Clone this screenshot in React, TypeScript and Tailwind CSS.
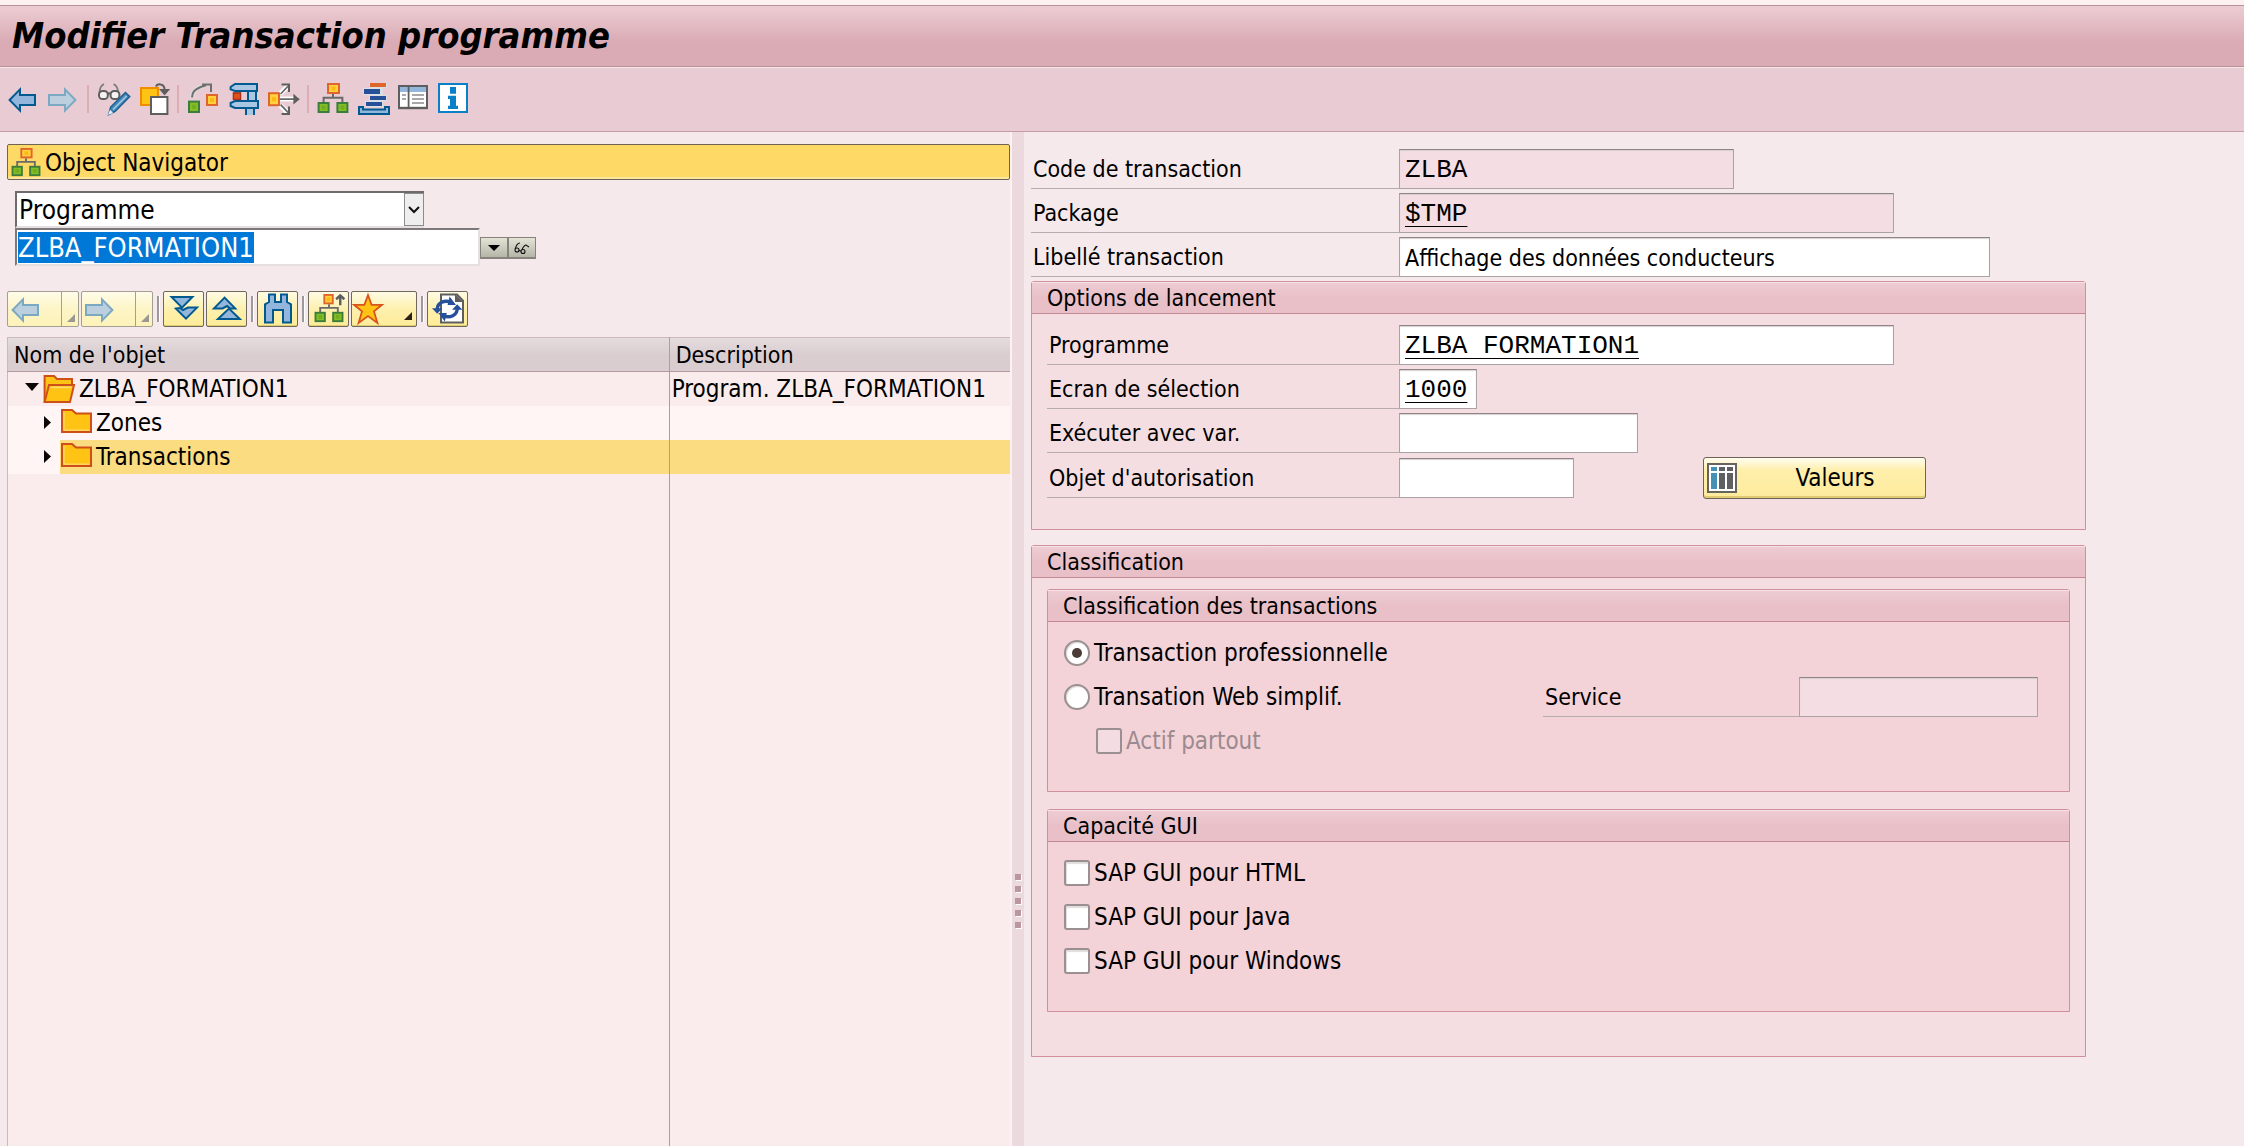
import { useEffect, useRef } from 'react';
import type { ReactNode } from 'react';

/* ---------- Icons (16-unit grid) ---------- */

function Icon({ children, className = 'size-8' }: { children: ReactNode; className?: string }) {
  return (
    <svg viewBox="0 0 16 16" className={`shrink-0 overflow-visible ${className}`} fill="none" aria-hidden="true">
      {children}
    </svg>
  );
}

function ArrowLeft({ dim = false, className }: { dim?: boolean; className?: string }) {
  return (
    <Icon className={className}>
      <path
        d="M1.3 8.5 6.5 3.2V6H14v5H6.5v2.8Z"
        fill={dim ? '#bccfdf' : '#93b7dc'}
        stroke={dim ? '#7ba9c2' : '#00598f'}
      />
    </Icon>
  );
}

function ArrowRight({ className }: { className?: string }) {
  return (
    <Icon className={className}>
      <path d="M14.2 8.5 9 3.2V6H1v5h8v2.8Z" fill="#bccfdf" stroke="#7ba9c2" />
    </Icon>
  );
}

function Square({ x, y, w = 6, h = 5.5, tone }: { x: number; y: number; w?: number; h?: number; tone: 'green' | 'orange' }) {
  const green = tone === 'green';
  return (
    <>
      <rect x={x + 0.5} y={y + 0.5} width={w - 1} height={h - 1} fill={green ? '#86bc25' : '#ffd040'} stroke={green ? '#3a7d3c' : '#e0652a'} />
      <rect x={x + w / 2 - 1} y={y + h / 2 - 1} width="2" height="2" fill={green ? '#6fae1e' : '#ffb80f'} />
    </>
  );
}

function DisplayChange() {
  return (
    <Icon>
      <path d="M1.2 4.8C1.400 2.500 2 1.200 3.500.6M10.600 4.800C10.400 2.500 9.800 1.200 8.300.6" stroke="#7d7d7d" strokeWidth=".9" />
      <rect x="1" y="4" width="4.4" height="4" rx="1.8" fill="#f6f2f3" stroke="#5e5e5e" />
      <rect x="6.8" y="4" width="4.4" height="4" rx="1.8" fill="#f6f2f3" stroke="#5e5e5e" />
      <path d="M5 5.2h2" stroke="#5e5e5e" />
      <path d="m5.8 15.8 1-3.8 7.4-7.3 2.2 2.1-7.3 7.4Z" fill="#3f86b5" stroke="#1d5f93" strokeWidth=".7" />
      <path d="m8 13.3 6.8-6.9" stroke="#9cc3e0" strokeWidth=".9" />
      <path d="m5.5 16 2.6-1-1.6-1.6Z" fill="#e4eef5" />
    </Icon>
  );
}

function CopyObject() {
  return (
    <Icon>
      <rect x="2" y="2.5" width="8.5" height="8.5" fill="#ffc313" stroke="#f08c00" />
      <rect x="7" y="7" width="8.2" height="8.5" fill="#fff" stroke="#5e5e5e" />
      <path d="M9.5 1.8C10 .3 13.4 0 13.8 3" stroke="#5e5e5e" />
      <path d="M11 3h5.6l-2.8 3.2Z" fill="#5e5e5e" />
    </Icon>
  );
}

function MoveObject() {
  return (
    <Icon>
      <path d="M2.5 7.5c0-3 1.5-4.5 4-5.5L9 1.3" stroke="#dcdcdc" strokeWidth="2.2" />
      <path d="M2.5 7.3c0-3 1.5-4 4.3-5.3l2.7-.8M7.5.7H12v3.8" stroke="#6f6f6f" />
      <Square x={0.5} y={8.8} tone="green" h={6.2} />
      <Square x={9.5} y={5.5} tone="orange" h={6} />
    </Icon>
  );
}

function Clamp() {
  return (
    <Icon>
      <path d="M10.5 4h4v6h-4zM9.5 12.5h4V16h-4z" fill="#a9c6e3" />
      <path d="M10.5 4v6M14.5 4v6M9.5 12.5V16M13.5 12.5V16" stroke="#00598f" />
      <path d="M15 .5H4L1.8 2v1.2L4 4h11Z" fill="#a9c6e3" stroke="#00598f" />
      <path d="M15.5 9H4L1.8 10v1.5L4 12.5h11.5Z" fill="#a9c6e3" stroke="#00598f" />
      <path d="M3 5h4M3 8.2h4" stroke="#5e5e5e" strokeWidth=".7" />
      <rect x="3.2" y="5" width="3.6" height="3.2" fill="#e0501a" stroke="#a8321c" strokeWidth=".7" />
    </Icon>
  );
}

function WhereUsed() {
  return (
    <Icon>
      <path d="m6.5 5.5 4-4M6.5 11l4 4" stroke="#fff" strokeWidth="2.4" />
      <path d="M6.5 8h9" stroke="#fff" strokeWidth="2.4" />
      <path d="m6.8 5.5 3.8-4M6.8 10.8l3.8 4M6.5 8.1H14" stroke="#6a6a6a" strokeWidth=".9" />
      <path d="M7.3.7H11v3.8M7.3 15.5H11v-3.8" stroke="#5e5e5e" />
      <path d="M13.2 5.4v5.4L16.4 8.1Z" fill="#5e5e5e" />
      <Square x={0.5} y={4.6} tone="orange" h={7} />
    </Icon>
  );
}

function Hierarchy({ className, arrow = false }: { className?: string; arrow?: boolean }) {
  return (
    <Icon className={className}>
      <path d="M8 5.5V7.4M3.3 9.8V7.4h9.4v2.4" stroke="#6a6a6a" />
      <Square x={5} y={0} tone="orange" w={arrow ? 5.5 : 6.5} h={5.5} />
      <Square x={0.3} y={9.5} tone="green" />
      <Square x={9.7} y={9.5} tone="green" />
      {arrow && <path d="M14 6V1M11.8 2.8 14 .7l2.2 2.1" stroke="#5e5e5e" strokeWidth="1.3" />}
    </Icon>
  );
}

function Stack() {
  return (
    <Icon>
      <path d="M6 0h9v2.5h-2V6h2v3h-2v3H4V9h2V6H3V2.5h3Z" fill="#dcdfe2" />
      <rect x="6.5" width="8" height="2" fill="#e0652a" />
      <path d="M3.5 3h8v2.5h-8zM6.5 6.5h8v2h-8zM4.5 9.5h8v2h-8z" fill="#26509a" />
      <path d="M1 12h2v1.3h11V12h2v3.5H1Z" fill="#93b7dc" stroke="#00598f" />
    </Icon>
  );
}

function PanelList() {
  return (
    <Icon>
      <rect x="1" y="1.5" width="14" height="11" fill="#fff" stroke="#5e5e5e" />
      <path d="M1.5 2h13v2.5h-13z" fill="#93b7dc" />
      <path d="M5.8 2v10" stroke="#5e5e5e" strokeWidth=".9" />
      <path d="M2.5 6h2M2.5 8h2M7.5 6h6M7.5 8h6M7.5 10h6" stroke="#a8a8a8" strokeWidth=".9" />
      <path d="M.5 12.5h15" stroke="#5e5e5e" strokeWidth="1.2" />
    </Icon>
  );
}

function Info() {
  return (
    <Icon>
      <rect x="1" y=".5" width="14" height="14" fill="#fff" stroke="#0a80c8" />
      <path d="M6.5 2h3v3.4h-3zM5.5 6.4h4v5h1v1.6h-5v-1.6h1V8h-1Z" fill="#0a80c8" />
    </Icon>
  );
}

function ChevronsDown() {
  return (
    <Icon>
      <path d="M1.8 2h10.4L7 7.3Z" fill="#93b7dc" stroke="#00598f" />
      <path d="M4 7.8 6 7.5l1.5 1L10 7.3h4.5L9 12.8Z" fill="#93b7dc" stroke="#00598f" />
    </Icon>
  );
}

function ChevronsUp() {
  return (
    <Icon>
      <path d="m1.5 7.7 5.3-5.4 5.3 5.4H9.5L8 6.5 5.8 7.7Z" fill="#93b7dc" stroke="#00598f" />
      <path d="M3.5 13 9 7.8l5.4 5.2Z" fill="#93b7dc" stroke="#00598f" />
    </Icon>
  );
}

function Binoculars() {
  return (
    <Icon>
      <path
        d="M3.500.8h3v3.700h3V.8h3v3.700l2 1.200v9h-4V8.500H5.500v6.200h-4V5.700l2-1.200Z"
        fill="#93b7dc"
        stroke="#00598f"
      />
    </Icon>
  );
}

function Star() {
  return (
    <Icon>
      <path
        d="m8 1 1.8 4.9H15l-4 3.3 1.7 5.8L8 11.5 3.3 15 5 9.2 1 5.9h5.2Z"
        fill="#ffc313"
        stroke="#d9531e"
        strokeWidth=".9"
      />
    </Icon>
  );
}

function Refresh() {
  return (
    <Icon>
      <path d="M4.500.8h8l3 3v11h-11Z" fill="#fff" stroke="#5e5e5e" />
      <path d="M11.500.5v4h4.200Z" fill="#5e5e5e" />
      <path d="M2.600 8C2.800 5 6 3.200 9.600 4.600" stroke="#26509a" strokeWidth="1.700" />
      <path d="M12.600 8c-.2 3-3.400 4.800-7 3.400" stroke="#26509a" strokeWidth="1.700" />
      <path d="M8.800 1.800 12 6H7.800ZM6.400 14.200 3.200 10h4.200ZM0 7.600h5.200L2.600 10.400ZM10 8.400h5.200L12.600 5.600Z" fill="#26509a" />
    </Icon>
  );
}

function Folder({ open = false }: { open?: boolean }) {
  return (
    <Icon>
      {open ? (
        <>
          <path d="M.8 14.5V1.5h4.7L7 3h7.5v3" fill="#ffc313" stroke="#cf4f1a" />
          <path d="M.8 14.5 3 6h12.5l-2 8.5Z" fill="#ffc313" stroke="#cf4f1a" />
          <path d="M3.8 7.2h10.4" stroke="#ffdc6e" strokeWidth=".8" />
        </>
      ) : (
        <>
          <path d="M1 12.5V1.5h5L8 3.3h7.5v9.2Z" fill="#ffc313" stroke="#cf4f1a" />
          <path d="M2 11.6h12.6M2 2.5v9" stroke="#ffdc6e" strokeWidth=".6" />
        </>
      )}
    </Icon>
  );
}

function ValuesIcon() {
  return (
    <svg viewBox="0 0 30 30" className="size-[30px] shrink-0" aria-hidden="true">
      <rect x="1" y="1" width="28" height="28" fill="#fff" stroke="#66645f" strokeWidth="2" />
      <path d="M4 4h6v4H4zM4 10h6v16H4z" fill="#4590b5" />
      <path d="M12 4h6v4h-6zM12 10h6v16h-6zM20 4h6v4h-6zM20 10h6v16h-6z" fill="#5e6063" />
    </svg>
  );
}

/* ---------- Controls ---------- */

function ToolButton({ label, children }: { label: string; children: ReactNode }) {
  return (
    <button type="button" aria-label={label} className="block">
      {children}
    </button>
  );
}

function Separator() {
  return <span className="h-7 w-[2px] bg-[#dfaeb5]" />;
}

function YellowButton({ label, className = 'w-[41px] justify-center', children }: { label: string; className?: string; children: ReactNode }) {
  return (
    <button
      type="button"
      aria-label={label}
      className={`flex h-9 shrink-0 items-center rounded-[2px] border border-[#6d695c] bg-linear-to-b from-[#fffbe4] via-[#fdf0ae] to-[#fdec98] shadow-[inset_0_-1px_0_#e0cb72] ${className}`}
    >
      {children}
    </button>
  );
}

function Corner({ dim = false }: { dim?: boolean }) {
  return (
    <svg viewBox="0 0 8 8" className="size-2 shrink-0" aria-hidden="true">
      <path d="M8 0v8H0Z" fill={dim ? '#9c9792' : '#2b2118'} />
    </svg>
  );
}

function HistoryButton({ label, children }: { label: string; children: ReactNode }) {
  return (
    <div className="flex h-9 w-[72px] shrink-0 rounded-[2px] border border-[#a39f93] bg-linear-to-b from-[#fffce9] via-[#fdf5c6] to-[#fdf2b9]">
      <button type="button" aria-label={label} className="flex flex-1 items-center border-r border-[#a39f93] pl-[2px]">
        {children}
      </button>
      <button type="button" aria-label={`${label} (liste)`} className="flex w-4 items-end justify-end p-[3px] pb-1">
        <Corner dim />
      </button>
    </div>
  );
}

function BarMark() {
  return <span className="mx-1 h-[26px] w-[2px] bg-[#9d9a9b] shadow-[1px_0_0_#fff]" />;
}

function Field({
  id,
  label,
  labelWidth = 'w-[352px]',
  width,
  value = '',
  mono = false,
  underline = false,
  readOnly = false,
}: {
  id: string;
  label: string;
  labelWidth?: string;
  width: string;
  value?: string;
  mono?: boolean;
  underline?: boolean;
  readOnly?: boolean;
}) {
  return (
    <div className="flex h-10">
      <label htmlFor={id} className={`flex shrink-0 items-center border-b border-[#b5acae] pt-px pl-[2px] ${labelWidth}`}>
        {label}
      </label>
      <input
        id={id}
        type="text"
        defaultValue={value}
        readOnly={readOnly}
        className={`min-w-0 border border-[#aaa2a4] border-t-[#8f8587] px-[5px] pt-px shadow-[inset_0_1px_1px_#d8cfd1] outline-none ${width} ${readOnly ? 'bg-[#f4dde3]' : 'bg-white'} ${
          mono ? "font-['Courier_New','Liberation_Mono',monospace] text-[26px] leading-9" : ''
        } ${underline ? 'underline decoration-1 underline-offset-[5px] [text-decoration-skip-ink:none]' : ''}`}
      />
    </div>
  );
}

function Group({ title, inner = false, className = '', children }: { title: string; inner?: boolean; className?: string; children: ReactNode }) {
  return (
    <fieldset
      aria-label={title}
      className={`min-w-0 rounded-t-[3px] border border-[#cf8f9b] ${inner ? 'bg-[#f3d3d8]' : 'bg-[#f4dee1]'} ${className}`}
    >
      <h2 className="h-8 border-b border-[#c38793] bg-linear-to-b from-[#eeccd3] to-[#e9c0c8] to-50% pl-[15px] leading-8 shadow-[inset_0_1px_0_#f7e3e7]">
        {title}
      </h2>
      {children}
    </fieldset>
  );
}

function Check({ id, label }: { id: string; label: string }) {
  return (
    <div className="flex h-10 items-center gap-1">
      <input
        id={id}
        type="checkbox"
        className="size-[26px] shrink-0 appearance-none rounded-[3px] border-2 border-[#9a9092] bg-white shadow-[inset_1px_2px_1px_#e2dcdd] checked:bg-[#8a7f81] disabled:bg-[#f4dde2] disabled:shadow-none"
      />
      <label htmlFor={id} className="text-2xl">{label}</label>
    </div>
  );
}

function Radio({ id, label, checked = false }: { id: string; label: string; checked?: boolean }) {
  return (
    <div className="flex h-10 items-center gap-1">
      <input
        id={id}
        type="radio"
        name="classification"
        defaultChecked={checked}
        className="grid size-[26px] shrink-0 appearance-none place-items-center rounded-full border-2 border-[#9a9092] bg-white shadow-[inset_1px_1px_1px_#ded6d7] before:size-[10px] before:rounded-full checked:before:bg-[#4a3b34]"
      />
      <label htmlFor={id} className="text-2xl">{label}</label>
    </div>
  );
}

function Expander({ open = false }: { open?: boolean }) {
  return (
    <svg viewBox="0 0 14 14" className="size-3.5 shrink-0" aria-hidden="true">
      <path d={open ? 'M0 1h14L7 9Z' : 'M2 0v13l7-6.500Z'} fill="#0c0606" />
    </svg>
  );
}

/* ---------- Screen ---------- */

function ObjectNavigator() {
  const objectName = useRef<HTMLInputElement>(null);

  useEffect(() => {
    objectName.current?.focus();
    objectName.current?.select();
  }, []);

  return (
    <aside className="flex min-w-0 flex-col border-r-2 border-[#fdf1f2] pt-3 pl-[7px]">
      <h2 className="flex h-9 items-center gap-1 rounded-[2px] border border-[#6d6455] bg-[#fed966] pt-px pl-[3px] text-2xl shadow-[inset_0_-2px_0_#fde79c]">
        <Hierarchy className="size-[30px]" />
        Object Navigator
      </h2>

      <div className="mt-[11px] pl-2">
        <div className="relative w-[409px] border-t-2 border-b-2 border-l-2 border-[#6f6a6b] border-b-[#e6dfe1]">
          <select
            aria-label="Type d'objet"
            defaultValue="Programme"
            className="block h-[33px] w-full appearance-none bg-white pt-[2px] pl-[2px] text-[26px] leading-[31px] outline-none"
          >
            <option>Programme</option>
          </select>
          <span className="pointer-events-none absolute top-0 right-0 flex h-[33px] w-5 items-center justify-center border border-[#8c8c8c] bg-[#eeeeee]">
            <svg viewBox="0 0 12 8" className="h-2 w-3" fill="none" aria-hidden="true">
              <path d="m1 1 5 5 5-5" stroke="#111" strokeWidth="2" />
            </svg>
          </span>
        </div>
        <div className="flex">
          <input
            ref={objectName}
            type="text"
            aria-label="Nom de l'objet"
            defaultValue="ZLBA_FORMATION1"
            className="h-[38px] w-[465px] border-2 border-[#7d7879] border-r-[#e6dfe1] border-b-[#e6dfe1] bg-white px-px pt-px text-[27px] leading-8 outline-none selection:bg-[#0078d7] selection:text-white"
          />
          <div className="mt-[9px] flex h-[22px]">
            <button type="button" aria-label="Historique" className="flex w-7 items-center justify-center border border-b-2 border-[#84847c] bg-linear-to-b from-[#e3e3d6] to-[#b5b5a8]">
              <svg viewBox="0 0 12 6" className="h-1.5 w-3" aria-hidden="true">
                <path d="M0 0h12L6 6Z" fill="#000" />
              </svg>
            </button>
            <button type="button" aria-label="Afficher" className="flex w-7 items-center justify-center border border-b-2 border-[#84847c] bg-linear-to-b from-[#e3e3d6] to-[#b5b5a8]">
              <svg viewBox="0 0 16 14" className="h-3.5 w-4" fill="none" stroke="#111" strokeWidth="1.1" aria-hidden="true">
                <circle cx="3" cy="9" r="2" />
                <circle cx="9" cy="10.500" r="2" />
                <path d="M1.200 8C2 5 3.500 2 6 2M8 9c1-3 2-4.500 4-5l3 2M5 9.500l2 .500" />
              </svg>
            </button>
          </div>
        </div>
      </div>

      <div className="mt-[25px] flex items-center">
        <div className="flex gap-[2px]">
          <HistoryButton label="Objet précédent"><ArrowLeft dim /></HistoryButton>
          <HistoryButton label="Objet suivant"><ArrowRight /></HistoryButton>
        </div>
        <BarMark />
        <div className="flex gap-[2px]">
          <YellowButton label="Développer"><ChevronsDown /></YellowButton>
          <YellowButton label="Réduire"><ChevronsUp /></YellowButton>
        </div>
        <BarMark />
        <YellowButton label="Rechercher"><Binoculars /></YellowButton>
        <BarMark />
        <div className="flex gap-[2px]">
          <YellowButton label="Afficher la hiérarchie"><Hierarchy className="size-[30px]" arrow /></YellowButton>
          <YellowButton label="Favoris" className="w-[66px] justify-between pr-1">
            <Star />
            <span className="self-end pb-1.5"><Corner /></span>
          </YellowButton>
        </div>
        <BarMark />
        <YellowButton label="Actualiser"><Refresh /></YellowButton>
      </div>

      <div className="mt-2.5 grid min-h-[500px] flex-1">
        <table className="h-full w-full table-fixed border-collapse border-t border-l border-[#cbb9be] bg-[#faecec] text-left">
          <thead>
            <tr className="h-[34px] bg-linear-to-b from-[#e4dcde] to-[#dacdd0] to-50%">
              <th className="w-[66%] border-r border-b border-[#b39aa2] p-0 pl-1.5 font-normal">Nom de l'objet</th>
              <th className="border-b border-[#b39aa2] p-0 pl-1.5 font-normal">Description</th>
            </tr>
          </thead>
          <tbody className="text-2xl">
            <tr className="h-[34px]">
              <td className="border-r border-[#b39aa2] p-0">
                <div className="flex h-[34px] items-center gap-1 pl-[17px]">
                  <Expander open />
                  <Folder open />
                  ZLBA_FORMATION1
                </div>
              </td>
              <td className="p-0 pl-[2px]">Program. ZLBA_FORMATION1</td>
            </tr>
            <tr className="h-[34px] bg-[#fff5f5]">
              <td className="border-r border-[#b39aa2] p-0">
                <div className="flex h-[34px] items-center gap-1 pl-[34px]">
                  <Expander />
                  <Folder />
                  Zones
                </div>
              </td>
              <td className="p-0" />
            </tr>
            <tr className="h-[34px] bg-[#fff5f5]">
              <td className="border-r border-[#b39aa2] p-0">
                <div className="flex h-[34px] items-center gap-1 pl-[34px]">
                  <Expander />
                  <span className="flex h-full flex-1 items-center gap-1 bg-[#fbdc81]">
                    <Folder />
                    Transactions
                  </span>
                </div>
              </td>
              <td className="bg-[#fbdc81] p-0" />
            </tr>
            <tr>
              <td className="border-r border-[#b39aa2] p-0" />
              <td className="p-0" />
            </tr>
          </tbody>
        </table>
      </div>
    </aside>
  );
}

function TransactionForm() {
  return (
    <form className="min-w-0 pt-[17px] pr-4 pb-8 pl-[7px]" onSubmit={(e) => e.preventDefault()}>
      <div className="flex flex-col gap-1">
        <Field id="code" label="Code de transaction" labelWidth="w-[368px]" width="w-[335px]" value="ZLBA" mono readOnly />
        <Field id="package" label="Package" labelWidth="w-[368px]" width="w-[495px]" value="$TMP" mono underline readOnly />
        <Field id="libelle" label="Libellé transaction" labelWidth="w-[368px]" width="w-[591px]" value="Affichage des données conducteurs" />
      </div>

      <Group title="Options de lancement" className="mt-1 max-w-[1055px]">
        <div className="flex flex-col gap-1 px-[15px] pt-[11px] pb-[30px]">
          <Field id="programme" label="Programme" width="w-[495px]" value="ZLBA FORMATION1" mono underline />
          <Field id="ecran" label="Ecran de sélection" width="w-[78px]" value="1000" mono underline />
          <Field id="variante" label="Exécuter avec var." width="w-[239px]" />
          <div className="flex items-center gap-[129px]">
            <Field id="autorisation" label="Objet d'autorisation" width="w-[175px]" />
            <button
              type="button"
              className="flex h-[42px] w-[223px] items-center rounded-[3px] border border-[#6d6455] bg-linear-to-b from-[#fffdf0] via-[#feefab] via-30% to-[#feeb9c] pl-[3px] text-2xl shadow-[inset_0_-2px_0_#dfcb76]"
            >
              <ValuesIcon />
              <span className="flex-1 pr-3 pl-5">Valeurs</span>
            </button>
          </div>
        </div>
      </Group>

      <Group title="Classification" className="mt-[15px] max-w-[1055px]">
        <div className="flex flex-col gap-[17px] px-[15px] pt-[11px] pb-11">
          <Group title="Classification des transactions" inner>
            <div className="flex flex-col gap-1 pt-[11px] pr-[31px] pb-[30px] pl-4">
              <Radio id="pro" label="Transaction professionnelle" checked />
              <div className="flex items-center justify-between">
                <Radio id="web" label="Transation Web simplif." />
                <Field id="service" label="Service" labelWidth="w-64" width="w-[239px]" readOnly />
              </div>
              <fieldset disabled className="pl-8 text-[#9c8a8e]">
                <Check id="actif" label="Actif partout" />
              </fieldset>
            </div>
          </Group>
          <Group title="Capacité GUI" inner>
            <div className="flex flex-col gap-1 pt-[11px] pb-[30px] pl-4">
              <Check id="html" label="SAP GUI pour HTML" />
              <Check id="java" label="SAP GUI pour Java" />
              <Check id="windows" label="SAP GUI pour Windows" />
            </div>
          </Group>
        </div>
      </Group>
    </form>
  );
}

export default function App() {
  return (
    <div className="flex min-h-screen flex-col bg-[#f6e9eb] font-['DejaVu_Sans_Condensed','DejaVu_Sans',sans-serif] text-[23px] leading-[30px] text-black">
      <header className="border-t-[5px] border-[#fdf1f2]">
        <div className="border-t border-b border-[#b9919b] bg-linear-to-b from-[#eccdd3] to-[#daabb5] to-60% pl-3">
          <h1 className="text-[36px] leading-[60px] font-bold italic">Modifier Transaction programme</h1>
        </div>
        <nav aria-label="Fonctions" className="flex h-[65px] items-center gap-2 border-t border-b border-t-[#f7e6ea] border-b-[#c39da6] bg-[#e9ccd3] pb-[2px] pl-[7px]">
          <ToolButton label="Retour"><ArrowLeft /></ToolButton>
          <ToolButton label="Avancer"><ArrowRight /></ToolButton>
          <Separator />
          <ToolButton label="Afficher / modifier"><DisplayChange /></ToolButton>
          <ToolButton label="Autre objet"><CopyObject /></ToolButton>
          <Separator />
          <ToolButton label="Déplacer"><MoveObject /></ToolButton>
          <ToolButton label="Contrôler"><Clamp /></ToolButton>
          <ToolButton label="Cas d'emploi"><WhereUsed /></ToolButton>
          <Separator />
          <ToolButton label="Liste d'objets"><Hierarchy /></ToolButton>
          <ToolButton label="Pile de navigation"><Stack /></ToolButton>
          <ToolButton label="Fenêtre de navigation"><PanelList /></ToolButton>
          <ToolButton label="Aide"><Info /></ToolButton>
        </nav>
      </header>

      <main className="grid flex-1 grid-cols-[1012fr_12px_1220fr]">
        <ObjectNavigator />
        <div className="flex flex-col items-center justify-end gap-1.5 bg-[#ecd9de] pb-[218px]">
          {[0, 1, 2, 3, 4].map((dot) => (
            <span key={dot} className="size-1.5 bg-[#b8979e] shadow-[1px_1px_0_#fff]" />
          ))}
        </div>
        <TransactionForm />
      </main>
    </div>
  );
}
